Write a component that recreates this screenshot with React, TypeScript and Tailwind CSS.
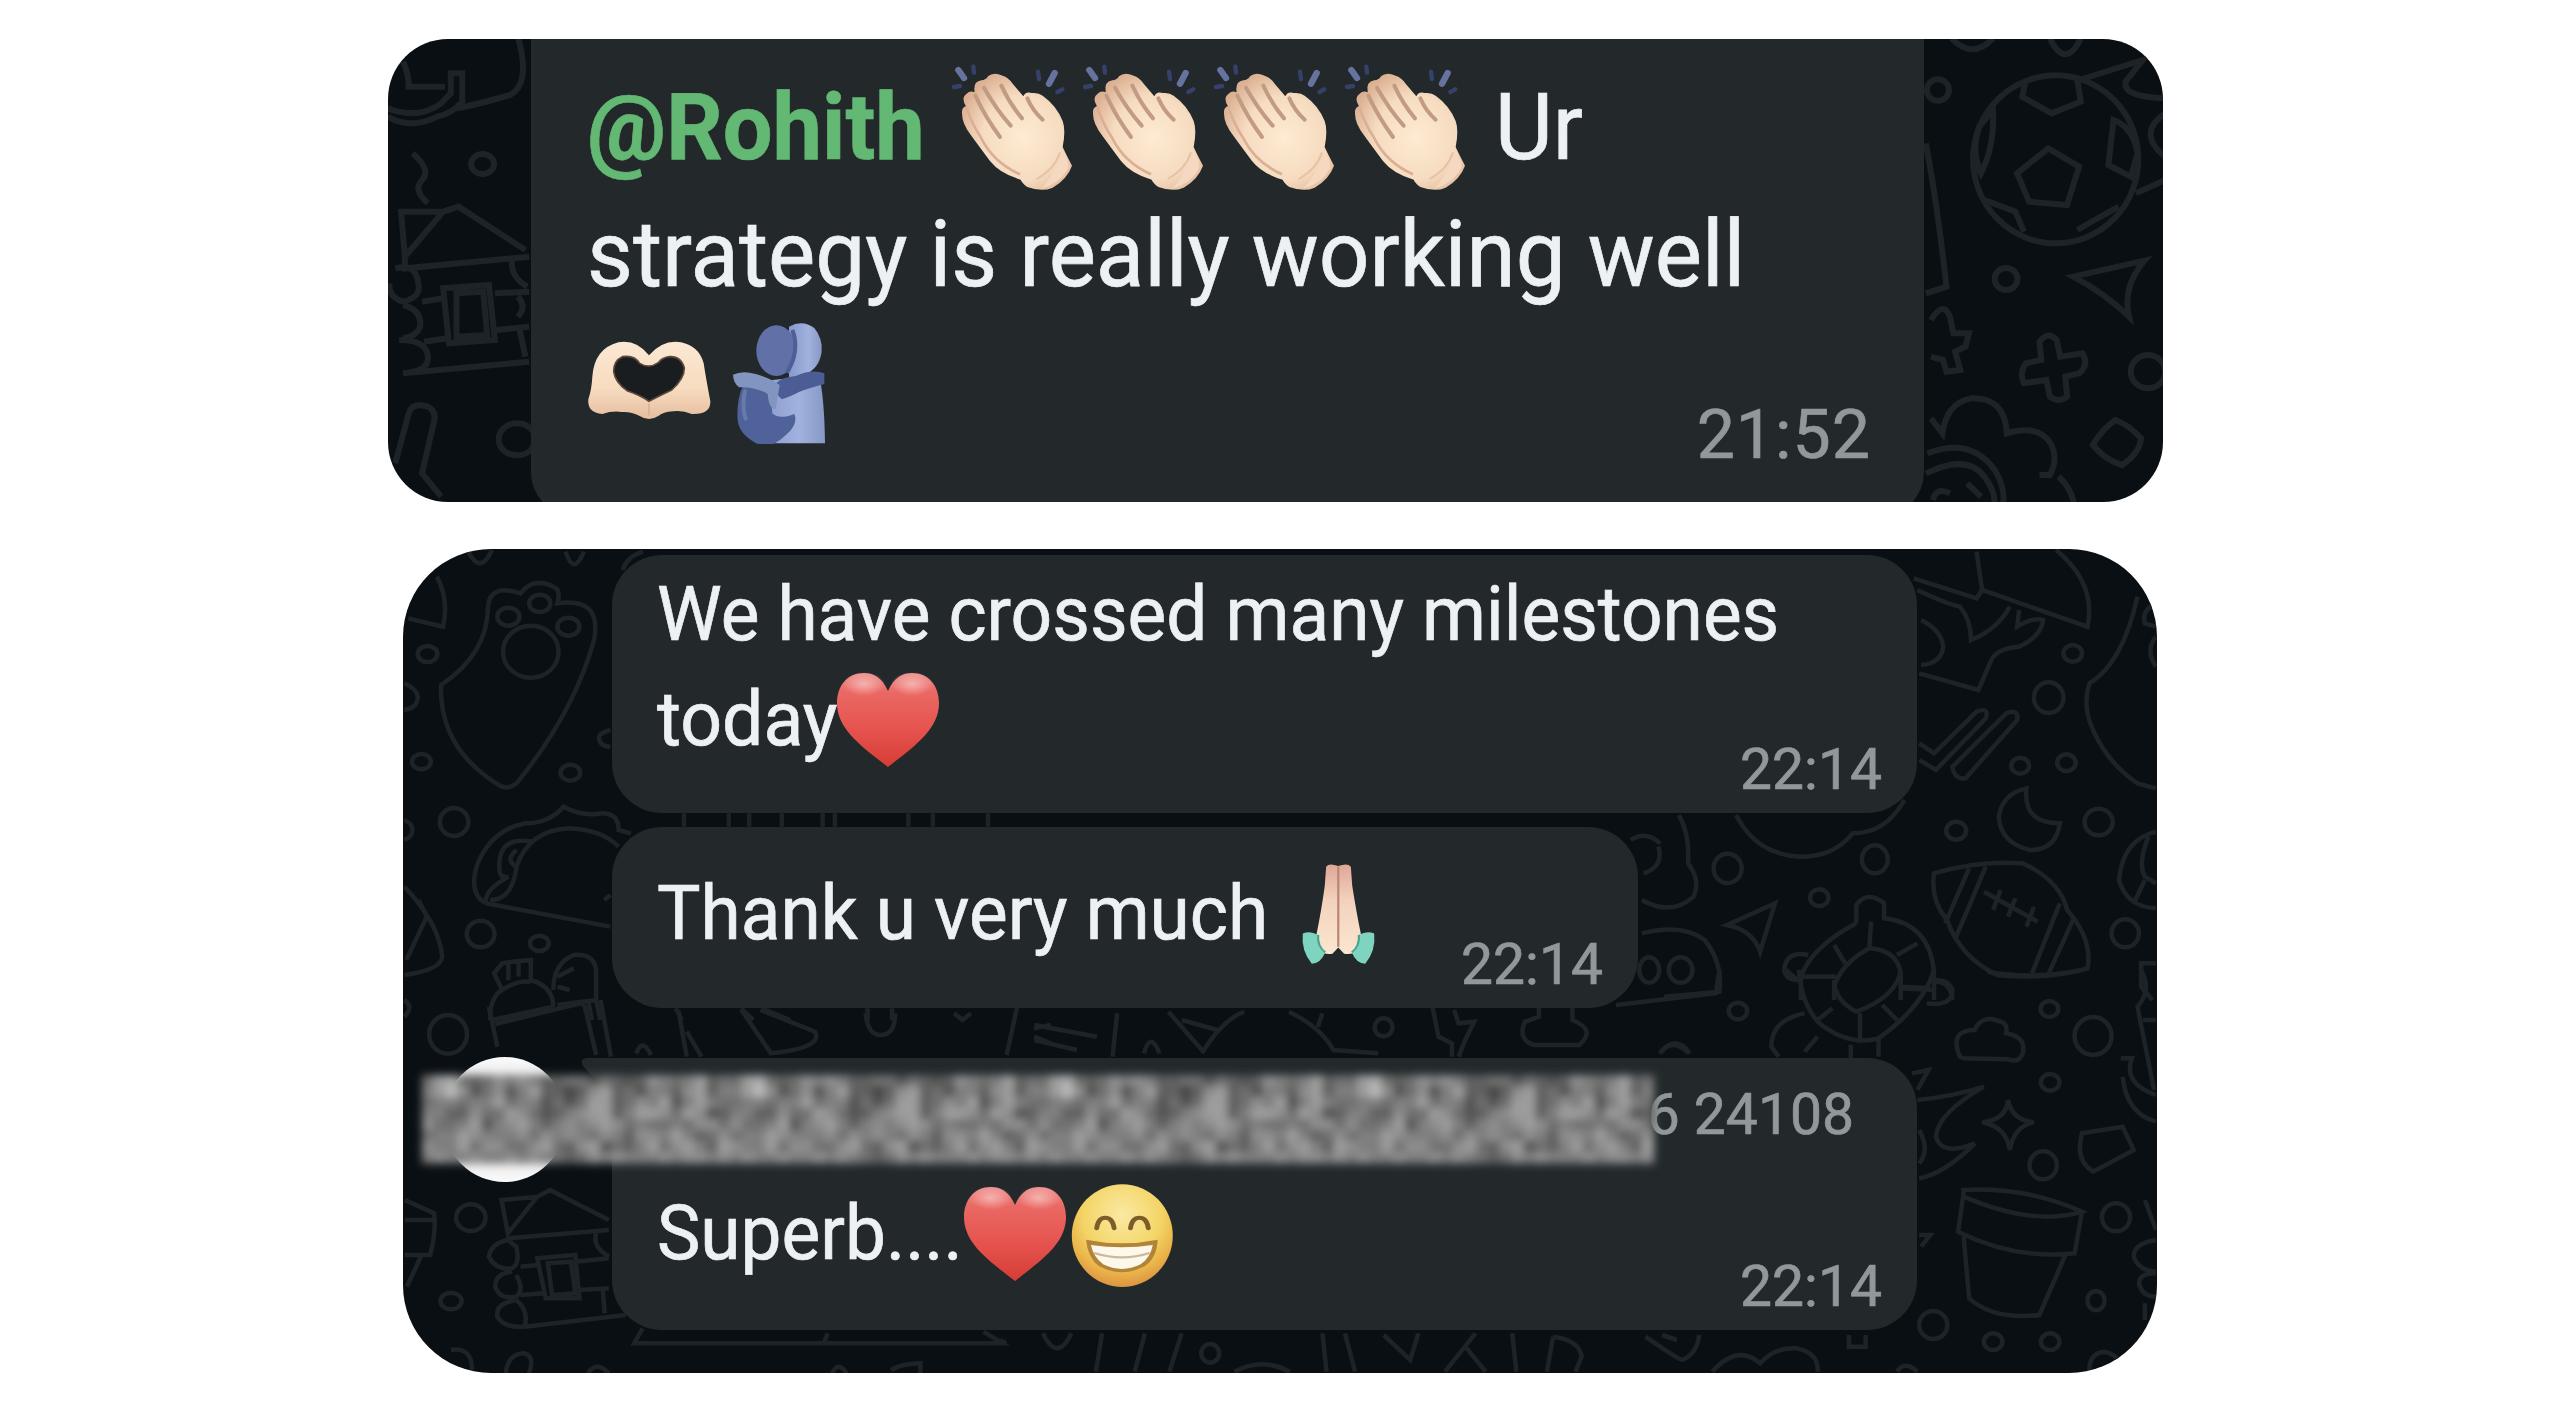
import type { ReactNode } from 'react';
import clsx from 'clsx';

// brightness levels of the strip that hides the sender, one digit per cell
const NOISE = [
  '47843465653344243236545734',
  '57962462573313673425536735',
  '45545574552424773465725754',
  '55336447642356773577647623',
  '64457256753565676454454664',
  '45576555646565465366575346',
  '65574664467436724357467537',
  '56556556565434656555656656',
];

function Noise() {
  const cells: ReactNode[] = [];
  for (let row = 0; row < NOISE.length; row++) {
    for (let col = 0; col < 104; col++) {
      const v = 52 + Number(NOISE[row][col % 26]) * 15;
      cells.push(
        <rect
          key={`${row}-${col}`}
          x={col * 11.92}
          y={row * 11}
          width={12.4}
          height={11.5}
          fill={`rgb(${v},${v},${v})`}
        />
      );
    }
  }
  return (
    <svg viewBox="0 0 1240 88" className="h-[88px] w-[1232px] overflow-visible" preserveAspectRatio="none">
      <filter id="soft" x="-2%" y="-15%" width="104%" height="130%">
        <feGaussianBlur stdDeviation="4.2" />
      </filter>
      <g filter="url(#soft)">{cells}</g>
    </svg>
  );
}

function Clap() {
  return (
    <svg viewBox="0 0 393 420" className="-mt-[5px] h-[140px] w-[131px] shrink-0 overflow-visible">
      <defs>
        <radialGradient id="palm" cx="0.55" cy="0.55" r="0.6">
          <stop offset="0" stopColor="#fdebd2" />
          <stop offset="0.6" stopColor="#f6dcc1" />
          <stop offset="1" stopColor="#dcb193" />
        </radialGradient>
      </defs>
      <g stroke="#35416a" strokeWidth="13" strokeLinecap="round">
        <path d="M55 45l17 24" strokeWidth="19" stroke="#66739f" />
        <path d="M100 35l2 18M42 96l18 -3" />
        <path d="M344 54l-17 32" strokeWidth="19" stroke="#66739f" />
        <path d="M294 50l3 22M352 111l15 -8" />
      </g>
      <path
        d="M66 176Q64 158 78 154Q62 128 80 116Q90 106 104 112Q98 80 124 76Q138 75 144 64Q160 50 188 62Q204 66 218 86L250 124Q256 108 276 114Q296 112 308 122Q350 152 368 198Q378 226 368 276Q376 294 396 332Q382 372 338 398Q306 412 262 396Q246 384 242 374Q180 356 150 318Q116 272 94 242Q66 206 66 176Z"
        fill="url(#palm)"
      />
      <g fill="none" stroke="#c29b84" strokeWidth="12" strokeLinecap="round">
        <path d="M106 122Q138 190 180 246" />
        <path d="M132 98Q168 162 212 212" />
        <path d="M184 92Q210 148 246 190" />
        <path d="M262 130Q278 168 308 194" />
      </g>
      <path d="M78 154Q94 204 124 250Q160 322 240 358" fill="none" stroke="#dbaf95" strokeWidth="8" />
      <path d="M368 286Q388 322 384 340Q360 386 304 400Q340 366 368 286Z" fill="#f4d9c0" />
      <path d="M360 292Q344 342 290 372" fill="none" stroke="#e7c3a4" strokeWidth="6" />
    </svg>
  );
}

function HeartHands() {
  return (
    <svg viewBox="84 24 393 381" className="h-[127px] w-[131px] shrink-0">
      <defs>
        <linearGradient id="skin" x1="0" y1="0" x2="0" y2="1">
          <stop offset="0" stopColor="#fbe8d3" />
          <stop offset="0.6" stopColor="#f7dcbf" />
          <stop offset="1" stopColor="#e6bda0" />
        </linearGradient>
      </defs>
      <path
        fillRule="evenodd"
        fill="url(#skin)"
        d="M88 268Q98 238 100 200Q106 116 178 97Q232 88 270 136Q312 88 366 97Q420 108 434 160Q440 200 454 274Q456 314 398 312Q370 300 342 304Q312 306 298 318Q270 336 242 318Q216 304 188 306Q160 302 130 312Q84 308 88 268ZM270 274Q304 256 338 240Q376 206 376 174Q366 138 332 140Q310 142 298 158Q270 178 242 160Q226 134 190 140Q164 152 164 184Q168 216 204 242Q246 256 270 274Z"
      />
      <path
        d="M270 274Q304 256 338 240Q376 206 376 174Q366 138 332 140Q310 142 298 158Q270 178 242 160Q226 134 190 140Q164 152 164 184Q168 216 204 242Q246 256 270 274Z"
        fill="#1a1d20"
        stroke="#5d493d"
        strokeWidth="5"
      />
      <path d="M270 280V316" stroke="#dbb196" strokeWidth="5" />
    </svg>
  );
}

function Hug() {
  return (
    <svg viewBox="477 24 393 381" className="h-[127px] w-[131px] shrink-0">
      <defs>
        <linearGradient id="back" x1="0" y1="0" x2="1" y2="0">
          <stop offset="0" stopColor="#8798cb" />
          <stop offset="0.6" stopColor="#a2b2de" />
          <stop offset="1" stopColor="#8598c4" />
        </linearGradient>
      </defs>
      <path d="M690 50Q730 28 766 54Q792 86 788 126Q780 176 740 192L690 210Z" fill="url(#back)" />
      <path d="M640 210L780 196Q796 260 798 400H640L600 330Z" fill="url(#back)" />
      <path d="M640 238Q650 204 710 198Q760 176 796 190V222Q750 234 720 246Q690 262 668 268Z" fill="#4b5d94" />
      <path d="M552 226Q600 222 634 246L640 310Q660 330 706 312Q716 336 694 362Q660 396 640 402H596Q540 374 536 330Q532 272 552 226Z" fill="#50629a" />
      <path d="M522 194Q550 180 590 192Q640 206 662 226L650 296Q630 300 626 252Q590 230 540 232Q522 216 522 194Z" fill="#8294c0" />
      <path d="M558 244Q548 290 560 326" stroke="#6979ae" strokeWidth="12" fill="none" strokeLinecap="round" />
      <ellipse cx="652" cy="122" rx="60" ry="76" fill="#6270a8" />
      <path d="M700 60Q724 120 684 188" stroke="#4e5f98" strokeWidth="12" fill="none" />
    </svg>
  );
}

function Heart() {
  return (
    <svg viewBox="0 0 102 96" className="h-[96px] w-[102px] shrink-0">
      <defs>
        <linearGradient id="red" x1="0" y1="0" x2="0" y2="1">
          <stop offset="0" stopColor="#ee8f8e" />
          <stop offset="0.2" stopColor="#ea6964" />
          <stop offset="0.6" stopColor="#e6534e" />
          <stop offset="1" stopColor="#d63c36" />
        </linearGradient>
        <radialGradient id="gloss">
          <stop offset="0" stopColor="#f8c4c2" stopOpacity="0.75" />
          <stop offset="1" stopColor="#f8c4c2" stopOpacity="0" />
        </radialGradient>
      </defs>
      <path
        d="M51 19C45 5 36 1 27 1C10 1 0 14 0 31C0 57 24 74 51 95C78 74 102 57 102 31C102 14 92 1 75 1C66 1 57 5 51 19Z"
        fill="url(#red)"
      />
      <ellipse cx="27" cy="12" rx="21" ry="12" fill="url(#gloss)" />
      <ellipse cx="75" cy="12" rx="21" ry="12" fill="url(#gloss)" />
    </svg>
  );
}

function Pray() {
  return (
    <svg viewBox="608 60 167 308" preserveAspectRatio="none" className="h-[103px] w-[75px] shrink-0">
      <defs>
        <linearGradient id="hands" x1="0" y1="0" x2="0" y2="1">
          <stop offset="0" stopColor="#dfa698" />
          <stop offset="0.4" stopColor="#f3d2bd" />
          <stop offset="1" stopColor="#fbe6d0" />
        </linearGradient>
      </defs>
      <path d="M664 74Q670 62 691 72Q712 62 719 74L722 130Q730 200 742 280L748 322Q728 338 704 334L691 316L678 334Q656 338 636 322L642 280Q654 200 661 130Z" fill="url(#hands)" />
      <path d="M691 74V314" stroke="#bb8775" strokeWidth="5" />
      <path d="M612 274Q628 264 646 278Q644 312 662 330Q652 364 632 364Q608 326 612 274Z" fill="#7fd4c0" />
      <path d="M771 274Q755 264 737 278Q739 312 721 330Q731 364 751 364Q775 326 771 274Z" fill="#7fd4c0" />
      <path d="M646 278Q644 312 662 330M737 278Q739 312 721 330" fill="none" stroke="#48a592" strokeWidth="5" />
    </svg>
  );
}

function Grin() {
  return (
    <svg viewBox="175 98 253 315" preserveAspectRatio="none" className="mt-[4px] h-[105px] w-[103px] shrink-0">
      <defs>
        <radialGradient id="face" cx="0.5" cy="0.3" r="0.7">
          <stop offset="0" stopColor="#fbe9a4" />
          <stop offset="0.55" stopColor="#f3d566" />
          <stop offset="0.8" stopColor="#ebb54a" />
          <stop offset="1" stopColor="#dd9440" />
        </radialGradient>
      </defs>
      <ellipse cx="301" cy="256" rx="124" ry="154" fill="url(#face)" />
      <g fill="none" stroke="#7c5c28" strokeWidth="12" strokeLinecap="round">
        <path d="M238 234Q242 202 259 202Q277 202 281 234" />
        <path d="M321 234Q325 202 343 202Q361 202 365 234" />
      </g>
      <path d="M212 268Q300 290 388 268Q386 322 356 348Q300 384 244 348Q216 322 212 268Z" fill="#b18437" />
      <path d="M224 284Q300 298 376 284Q370 322 346 342Q300 370 254 342Q230 320 224 284Z" fill="#fdf8ec" />
      <path d="M232 308Q300 334 368 308" fill="none" stroke="#cdb99a" strokeWidth="7" />
    </svg>
  );
}

const doodle = 'absolute inset-0 h-full w-full fill-none stroke-[#1d2327] [&_*]:[vector-effect:non-scaling-stroke]';

function WallpaperTop() {
  return (
    <svg viewBox="388 39 1775 463" className={clsx(doodle, 'stroke-[6px]')} preserveAspectRatio="none">
      <g transform="translate(380 30) scale(.3827 .33333)">
        <path d="M20 235Q100 270 160 220L185 190V130H215V215Q190 250 150 260Q80 300 20 260M60 95Q75 130 75 170H170M360 20Q395 160 340 195Q250 225 200 235" />
        <circle cx="268" cy="402" r="30" />
        <path d="M85 370Q135 420 110 450Q85 480 125 520M55 545H165L65 680ZM165 545L205 530L380 660M65 680V715L390 680M40 715Q95 700 100 760Q110 800 60 815Q20 800 25 760M60 825Q110 840 105 890Q95 920 60 925M50 930Q130 930 125 990Q120 1025 60 1030L390 995M165 775L285 765L300 930L180 940ZM200 790L270 785L280 915L200 920ZM110 815L165 805M115 935L175 925M300 790L390 785M305 900L390 890M345 690Q340 740 385 770M360 800Q385 830 360 860M365 900L380 980" />
        <path d="M40 1300L75 1150Q85 1115 125 1130Q150 1145 140 1180L110 1330L160 1400" />
        <circle cx="358" cy="1228" r="48" />
      </g>
      <g transform="translate(1640 30) scale(.34439 .33333)">
        <path d="M905 25Q965 90 1025 25M1190 25Q1235 120 1280 25" />
        <circle cx="865" cy="180" r="32" />
        <ellipse cx="1207" cy="388" rx="240" ry="252" />
        <path d="M1120 150L1110 200L1195 250L1280 215L1270 150M1185 355L1275 410L1240 525L1130 515L1095 430ZM1025 240Q1030 350 990 430Q960 360 985 290ZM1375 270L1360 405L1425 440L1445 370Q1430 290 1375 270ZM1000 510L1090 545L1115 605M1270 600L1320 570L1390 530" />
        <path d="M1275 150L1460 90L1410 155Q1400 200 1520 205M1525 250Q1440 310 1525 380M1440 490L1525 450" />
        <path d="M830 340Q860 500 890 770L830 790" />
        <circle cx="1063" cy="747" r="33" />
        <path d="M1258 740L1465 692Q1400 770 1420 860Q1350 790 1258 740Z" />
        <path d="M845 870Q880 810 900 860L910 910H955L945 950L915 965L930 1020L890 1025L880 990L845 980" />
        <path d="M1160 935Q1185 900 1210 930L1220 980L1285 970Q1305 1005 1275 1030L1235 1040L1240 1100Q1215 1120 1190 1100L1180 1050L1115 1060Q1100 1030 1120 1000L1165 990Z" />
        <circle cx="1475" cy="1025" r="50" />
        <path d="M845 1165L878 1210Q890 1120 960 1105Q1060 1100 1065 1210Q1160 1180 1195 1245Q1215 1290 1190 1335H1160M1380 1170Q1420 1185 1455 1225Q1450 1270 1400 1305Q1350 1290 1315 1245Q1340 1200 1380 1170ZM835 1270Q960 1220 1030 1320Q1060 1370 1055 1420M830 1330Q950 1270 1000 1340Q1030 1380 1030 1420M850 1410Q860 1370 900 1390M950 1360L990 1400M1215 1340Q1250 1370 1260 1420" />
      </g>
    </svg>
  );
}

function WallpaperBottom() {
  return (
    <svg viewBox="403 549 1754 824" className={clsx(doodle, 'stroke-[4.5px]')} preserveAspectRatio="none">
      <g transform="translate(390 540) scale(.40816 .33333)">
        <path d="M115 110Q145 180 130 260L45 235M190 30Q220 110 250 30M430 35Q450 110 475 35M570 90Q580 50 620 35" />
        <path d="M125 435Q240 340 240 200Q245 130 320 160Q350 110 400 140Q420 150 410 190Q520 170 500 300Q450 520 310 730Q285 755 260 730Q120 620 125 435Z" />
        <circle cx="367" cy="190" r="26" />
        <circle cx="290" cy="230" r="27" />
        <circle cx="437" cy="260" r="27" />
        <ellipse cx="345" cy="335" rx="68" ry="78" />
        <circle cx="92" cy="342" r="24" />
        <path d="M35 430Q70 450 68 475Q65 505 35 510M35 840Q55 850 55 870Q55 890 35 900M540 570Q510 580 512 595Q515 620 540 620" />
        <circle cx="77" cy="665" r="23" />
        <circle cx="442" cy="698" r="24" />
        <ellipse cx="157" cy="846" rx="35" ry="42" />
        <path d="M235 1090Q190 1060 215 970Q250 870 330 850Q390 850 425 800Q470 830 520 820Q560 820 560 870L590 880M245 1080Q300 1080 310 980Q340 870 440 865Q520 870 560 920M350 905Q280 890 270 950Q260 1020 290 1010Q230 1050 235 1090M310 930Q280 960 310 980M235 1090L540 1160M540 1065L525 1080" />
        <path d="M35 1040Q120 1150 128 1250Q125 1290 35 1305M90 1130L40 1260M70 1080L90 1130" />
        <ellipse cx="222" cy="1182" rx="34" ry="40" />
        <circle cx="366" cy="1210" r="23" />
        <path d="M245 1440Q245 1370 275 1350L255 1300L275 1270L300 1265L345 1260V1320Q400 1340 400 1400M290 1270V1320M315 1265V1310M275 1350Q310 1320 345 1325M400 1350Q400 1270 450 1245Q500 1240 505 1290V1380L410 1395M410 1310L450 1285M410 1340L440 1350M250 1440L400 1400M505 1380L515 1440M485 1380L495 1440M35 1380Q60 1400 35 1430" />
        <path d="M700 1405L715 1440M860 1405L890 1440M910 1405L980 1440M1170 1405V1440M1230 1405V1440" />
        <path d="M720 820V860M830 820V860M880 820V860M960 820V860M1060 820V860M1090 820V860M1270 820V860M1330 820V860M1465 820V860" />
      </g>
      <g transform="translate(1590 540) scale(.36990 .33333)">
        <path d="M875 115L1045 175L1060 150L1345 260Q1370 130 1260 30M1045 35L1060 150M885 150Q960 190 1000 200Q1030 240 1030 300Q1100 270 1135 200M1160 210L1155 260Q1200 230 1225 240Q1220 290 1160 320Q1100 325 1085 360L1050 450L890 400M895 240Q950 270 955 320Q950 370 895 375" />
        <circle cx="1305" cy="340" r="25" />
        <ellipse cx="1240" cy="473" rx="40" ry="46" />
        <path d="M890 610L930 640L1045 515Q1080 500 1070 535L935 690L890 660M980 680L1125 520Q1160 505 1155 540L1015 715Q985 720 980 680Z" />
        <path d="M1480 170Q1440 370 1350 430Q1330 500 1360 570Q1400 670 1480 730L1530 745M1530 190Q1490 210 1500 250L1530 260M1530 290Q1500 330 1530 380" />
        <circle cx="1163" cy="677" r="24" />
        <circle cx="1288" cy="668" r="25" />
        <path d="M1180 745Q1170 850 1270 850Q1260 930 1190 930Q1110 910 1105 830Q1115 760 1180 745Z" />
        <circle cx="990" cy="872" r="27" />
        <ellipse cx="1375" cy="846" rx="38" ry="40" />
        <path d="M395 825Q450 945 570 950Q660 950 710 880Q800 880 850 780M240 825Q270 880 265 970Q300 1020 280 1070Q220 1130 140 1080M110 900Q150 870 190 910M185 920Q200 980 145 1000" />
        <ellipse cx="372" cy="985" rx="38" ry="44" />
        <ellipse cx="770" cy="958" rx="35" ry="42" />
        <circle cx="620" cy="1073" r="25" />
        <path d="M370 1155L500 1090L460 1235Q440 1170 370 1155Z" />
        <path d="M930 1000Q1050 960 1170 970Q1270 1020 1290 1110Q1360 1200 1345 1285Q1240 1320 1100 1305Q1000 1250 965 1140Q920 1080 930 1000ZM1025 985L960 1150M1070 980L990 1190M1270 1090L1195 1300M1310 1130L1240 1300M1065 1055L1210 1145M1110 1050L1090 1110M1150 1075L1130 1130M1200 1100L1180 1160" />
        <path d="M1530 875Q1440 900 1430 1020Q1450 1100 1530 1105M1510 890Q1480 970 1500 1010L1530 1030M1500 1020L1470 1090" />
        <ellipse cx="1447" cy="1180" rx="37" ry="42" />
        <path d="M720 1150V1095Q750 1050 795 1090V1135Q920 1150 930 1300V1380M720 1150Q600 1220 570 1310V1380M760 1145L755 1225M660 1215L690 1270M885 1210L830 1245M575 1310H665M845 1345L925 1350M755 1225Q830 1230 840 1300V1380M755 1225Q680 1270 660 1340V1380M590 1245Q530 1230 525 1290Q530 1320 565 1320M935 1325Q975 1325 980 1380" />
        <path d="M140 1180Q250 1150 310 1200Q360 1270 350 1355L200 1370M1530 1270H1490V1340L1520 1380" />
        <ellipse cx="160" cy="1290" rx="27" ry="38" />
        <ellipse cx="245" cy="1290" rx="32" ry="38" />
      </g>
      <g transform="translate(390 1000) scale(.42092 .33333)">
        <ellipse cx="138" cy="103" rx="45" ry="58" />
        <path d="M235 20L255 140M250 72L470 5M460 5L490 165M500 0L525 170M685 30L705 170M705 95L740 170M585 160Q600 110 620 165M835 30L905 160M880 30L1010 95Q1030 145 900 160M1130 40Q1135 105 1165 105Q1200 105 1200 40M1490 20L1465 165M1570 75L1530 85M1530 110L1570 130M1340 40L1360 60L1380 40" />
        <ellipse cx="192" cy="653" rx="35" ry="40" />
        <path d="M35 600L105 640Q110 700 95 765H35M35 660H105M75 765L40 860" />
        <circle cx="145" cy="903" r="25" />
        <path d="M265 600L350 590L280 700ZM350 590L380 570L520 660M280 715L520 690M280 720Q240 730 235 770Q250 810 290 805Q310 790 300 740ZM290 815Q250 820 250 860Q260 900 300 890Q320 870 300 825M300 900Q250 910 255 950Q270 985 320 980Q330 930 300 900M320 980L560 945M350 775L440 765L450 895L370 895ZM375 790L430 785L440 880L385 885ZM310 800L350 795M310 885L365 880M440 785L520 775M450 870L520 865M490 700Q480 740 520 770M505 860L510 940" />
        <path d="M600 985L580 1030H1455L1410 995M1040 1000L1030 1030M145 1050Q195 1040 195 1110M275 1120Q280 1060 320 1060Q345 1070 330 1120M470 1120Q490 1080 520 1120M1050 1120Q1065 1080 1085 1120M1190 1110Q1220 1090 1260 1090V1120" />
      </g>
      <g transform="translate(1030 840) scale(.44643 .33333)">
        <path d="M195 520L185 650M10 555L150 590M10 600L105 630M255 640Q270 570 290 640M310 515L385 630M340 540L420 570M385 640Q430 540 480 515M580 515Q650 560 680 630L780 640M655 520L645 560" />
        <ellipse cx="792" cy="562" rx="20" ry="27" />
        <path d="M900 490L915 590L945 610V650M950 510L960 550L995 545L975 600L960 650M1110 540Q1090 600 1130 615H1230Q1270 570 1215 540V500M1140 500V530L1110 545M1410 640Q1440 590 1475 640" />
      </g>
      <g transform="translate(1590 970) scale(.36990 .33333)">
        <path d="M565 0Q570 100 620 160Q700 230 780 205Q900 110 930 0M660 30Q660 90 720 125Q830 80 840 0M655 115L610 155M730 130V220M790 105L830 150M580 20H660M840 50L920 55M580 130Q490 150 490 230L510 260M615 200L580 245M705 225V265M780 205V260M910 100Q980 110 980 60Q970 30 935 30M530 0L560 30" />
        <path d="M70 105L340 70L350 0M190 250Q230 190 270 250M1075 5Q1200 30 1330 0" />
        <circle cx="400" cy="123" r="25" />
        <circle cx="1242" cy="117" r="24" />
        <path d="M1000 260Q970 180 1040 180Q1060 130 1110 155Q1130 160 1125 190Q1180 200 1170 250Q1160 280 1130 268L1010 265Z" />
        <ellipse cx="1360" cy="198" rx="50" ry="57" />
        <circle cx="1244" cy="337" r="25" />
        <path d="M1490 0Q1520 60 1480 110L1525 360M1530 150H1495M1435 265H1465Q1440 340 1530 375M1440 320Q1450 430 1530 455" />
        <path d="M870 310L915 300L885 360M885 390Q980 380 1065 350Q940 430 935 500Q950 560 1040 520Q960 610 890 625M890 480Q920 540 890 580" />
        <path d="M1130 390Q1140 450 1200 457Q1145 470 1135 540Q1125 470 1060 457Q1125 450 1130 390ZM1330 490L1440 470L1470 540L1360 605Q1310 570 1330 490Z" />
        <ellipse cx="1225" cy="586" rx="37" ry="42" />
        <ellipse cx="1422" cy="742" rx="38" ry="42" />
        <path d="M1010 660Q1180 650 1330 725Q1200 770 1010 680ZM1010 670L995 785Q1150 870 1310 850L1330 725M1010 800L1025 985Q1090 1050 1215 1035L1285 855" />
        <path d="M890 795H920L895 830M1500 690L1530 780M1530 810Q1470 820 1470 860Q1480 900 1530 905M1530 910Q1480 910 1485 945Q1495 980 1530 980M1500 1000V1050" />
        <ellipse cx="1368" cy="992" rx="23" ry="29" />
        <ellipse cx="928" cy="1065" rx="38" ry="42" />
        <circle cx="1090" cy="1115" r="25" />
        <circle cx="1244" cy="1115" r="25" />
        <path d="M1350 1200Q1350 1150 1390 1145Q1420 1150 1435 1180M150 1100Q240 1170 250 1170Q290 1150 295 1095M700 1095V1130H745V1095M195 1095L235 1110M330 1205Q400 1120 460 1180Q500 1130 560 1135Q620 1150 615 1205M830 1205Q850 1170 885 1205" />
      </g>
      <g transform="translate(1000 1150) scale(.40816 .33333)">
        <path d="M105 550Q140 640 175 550M250 550L235 665M355 550L330 665M445 550L415 665M790 550L800 665M845 550L870 665M575 665Q640 620 710 665M940 555L1005 630L1025 550M1165 550L1090 665M1140 590L1190 665M1255 550L1265 665M1355 560L1340 665M1355 560Q1420 570 1425 620L1410 665M0 570L15 580" />
        <ellipse cx="515" cy="610" rx="22" ry="28" />
      </g>
    </svg>
  );
}

function Bubble({ className, children }: { className?: string; children: ReactNode }) {
  return (
    <div className={clsx('relative flex flex-col bg-[#23282b] text-[#eef1f3] [-webkit-text-stroke:0.7px]', className)}>
      {children}
    </div>
  );
}

function Time({ className, children }: { className?: string; children: ReactNode }) {
  return (
    <span className={clsx('shrink-0 self-end leading-none text-[#92979a]', className)}>{children}</span>
  );
}

export default function App() {
  return (
    <main className="h-[1422px] w-full overflow-hidden bg-white pt-[39px] pl-[388px] font-[Roboto,sans-serif] whitespace-nowrap">
      <section className="relative h-[463px] w-[1775px] overflow-hidden rounded-[60px] bg-[#0a0f13] pl-[143px]">
        <WallpaperTop />
        <Bubble className="h-[478px] w-[1393px] rounded-b-[45px] pt-[25px] pr-[54px] pl-[56px] text-[92px]">
          <div className="flex h-[127px] items-center leading-[127px]">
            <span className="w-[353px] origin-left scale-x-[.96] font-bold text-[#63b874]">@Rohith</span>
            <span className="flex w-[555px]">
              <Clap />
              <Clap />
              <Clap />
              <Clap />
            </span>
            <span className="origin-left scale-x-[.967]">Ur</span>
          </div>
          <p className="origin-left scale-x-[.968] leading-[127px]">strategy is really working well</p>
          <div className="flex h-[151px] items-start">
            <HeartHands />
            <Hug />
            <Time className="-mr-px ml-auto text-[68px] tracking-[1px]">21:52</Time>
          </div>
        </Bubble>
      </section>

      <section className="relative mt-[47px] ml-[15px] h-[824px] w-[1754px] overflow-hidden rounded-[88px] bg-[#0a0f13] pt-[6px] pl-[209px]">
        <WallpaperBottom />
        <Bubble className="h-[258px] w-[1305px] rounded-[50px] pt-[7px] pr-[35px] pl-[45px] text-[76px]">
          <p className="origin-left scale-x-[.96] leading-[105px]">We have crossed many milestones</p>
          <div className="flex h-[105px] items-center leading-[105px]">
            <span className="w-[180px] origin-left scale-x-[.965]">today</span>
            <Heart />
          </div>
          <Time className="-mt-[31px] text-[57px]">22:14</Time>
        </Bubble>

        <Bubble className="mt-[14px] h-[181px] w-[1026px] rounded-[50px] pt-[34px] pr-[35px] pl-[45px] text-[76px]">
          <div className="flex h-[105px] items-center leading-[105px]">
            <span className="w-[644px] origin-left scale-x-[.96]">Thank u very much</span>
            <Pray />
          </div>
          <Time className="-mt-[30px] text-[57px]">22:14</Time>
        </Bubble>

        <Bubble className="mt-[50px] h-[272px] w-[1305px] rounded-[50px] rounded-tl-none pr-[35px] pl-[45px] text-[76px]">
          <svg viewBox="0 0 32 40" className="absolute top-0 -left-[31px] h-[40px] w-[32px] fill-[#23282b]">
            <path d="M6 0H32V40L2 8Q-2 1 6 0Z" />
          </svg>
          <div className="absolute -top-[1px] -left-[169px] h-[125px] w-[123px] rounded-[50%] bg-linear-to-b from-[#fafafa] via-[#cfcfcf] to-[#fafafa]" />
          <div className="absolute top-[17px] -left-[190px]">
            <Noise />
          </div>
          <Time className="mt-[28px] mr-[28px] text-[57px]">6 24108</Time>
          <div className="mt-[38px] flex h-[105px] items-center leading-[105px]">
            <span className="w-[307px] origin-left scale-x-[.96]">Superb....</span>
            <Heart />
            <span className="ml-[5px]">
              <Grin />
            </span>
          </div>
          <Time className="-mt-[28px] text-[57px]">22:14</Time>
        </Bubble>
      </section>
    </main>
  );
}
